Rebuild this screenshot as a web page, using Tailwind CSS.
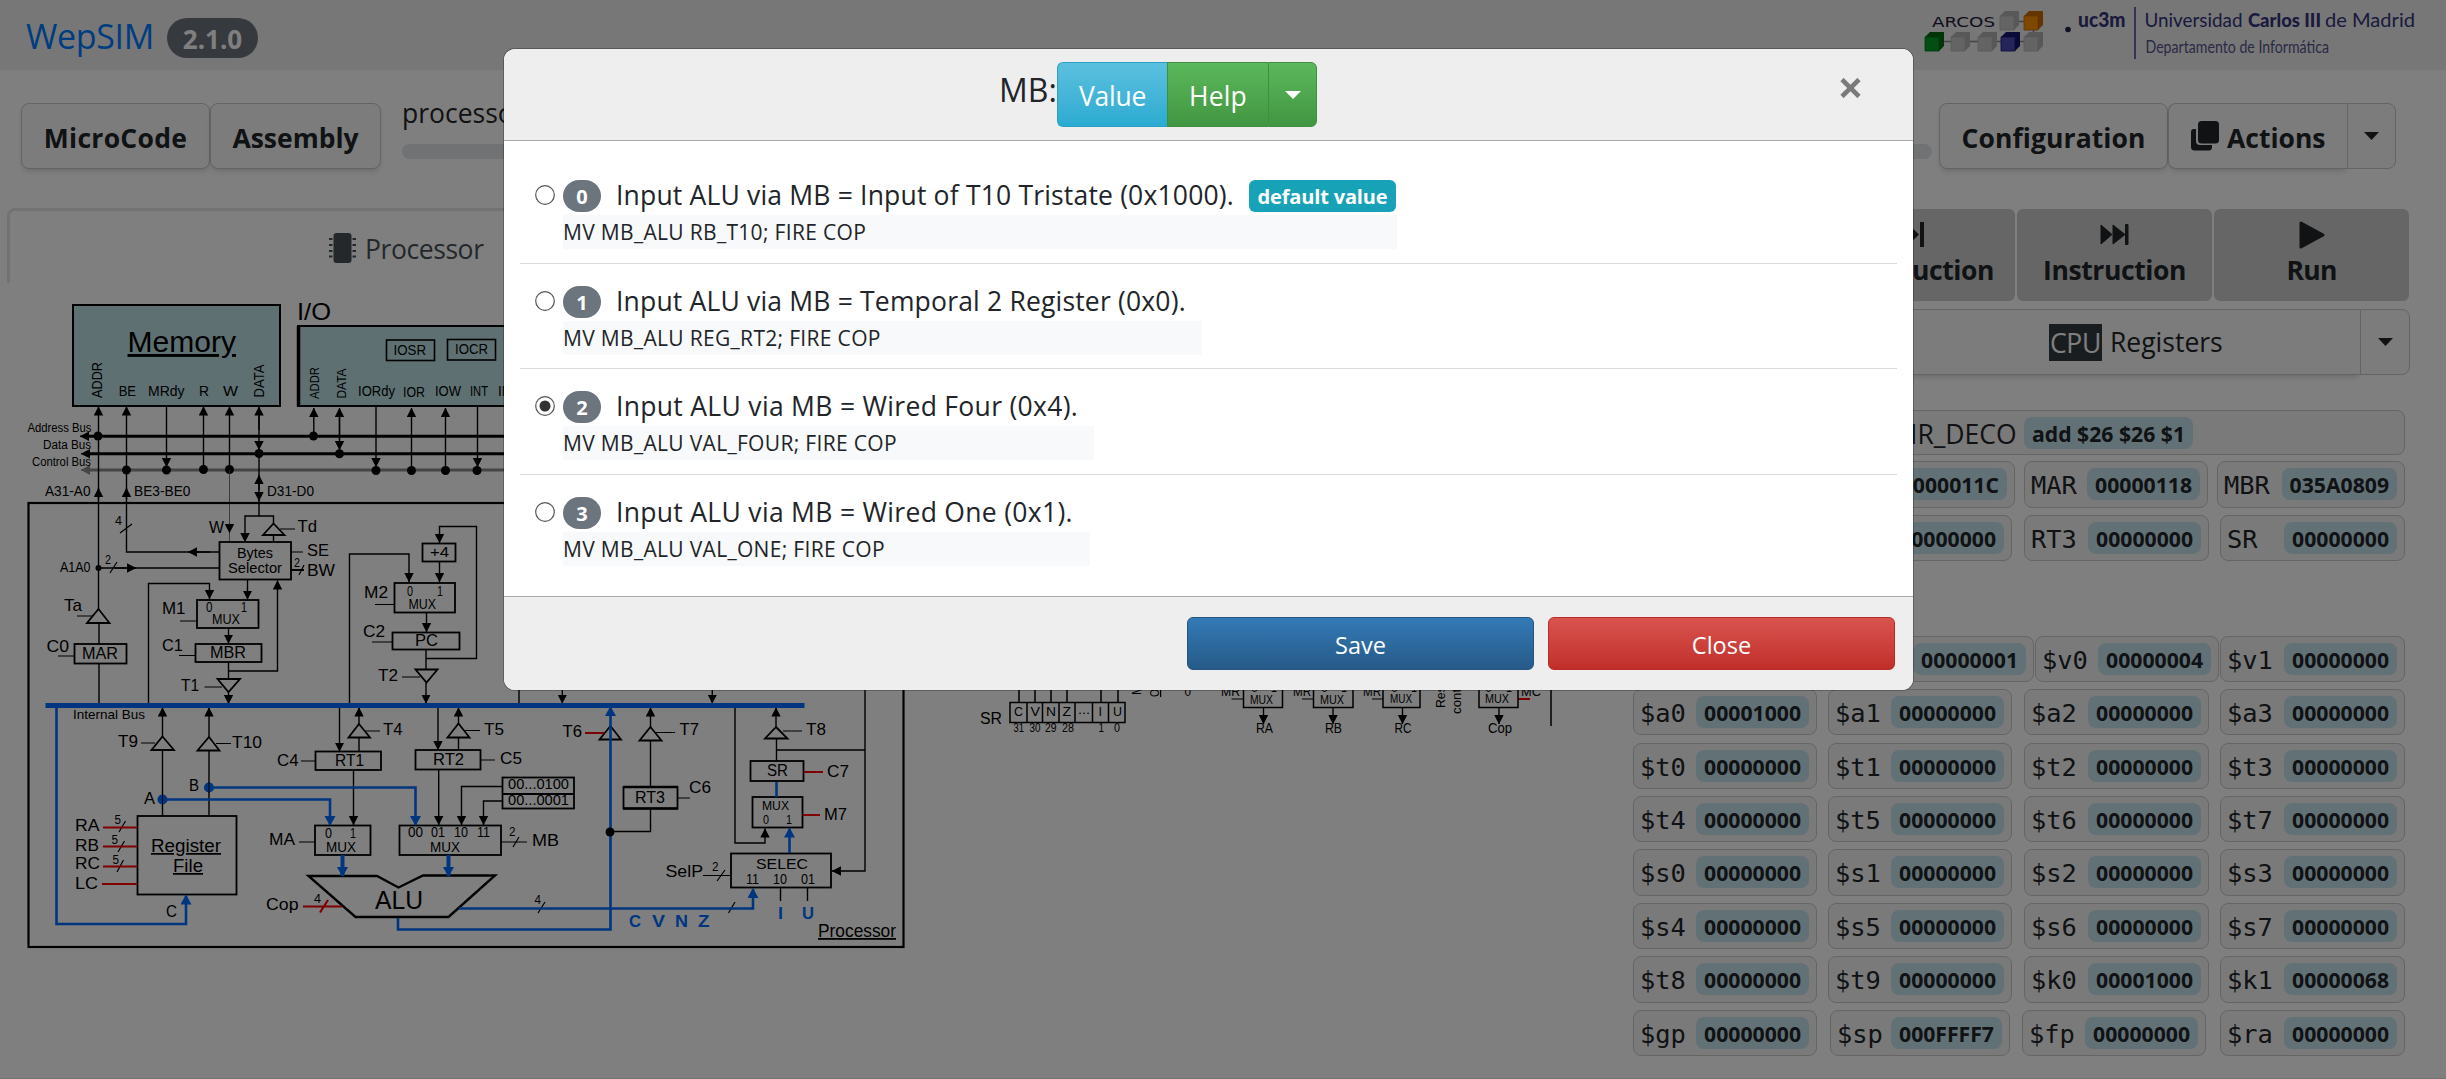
<!DOCTYPE html>
<html lang="en">
<head>
<meta charset="utf-8">
<title>WepSIM</title>
<script src="https://cdn.jsdelivr.net/npm/@tailwindcss/browser@4"></script>
</head>
<body class="relative w-[2446px] h-[1079px] overflow-hidden bg-white text-[#212529] font-['Open_Sans','Noto_Sans',sans-serif] text-[26.5px] leading-[36px]">

<div class="flex flex-col w-full h-full">
  <!-- top bar -->
  <header class="h-[70px] shrink-0 bg-[#eeeeee] flex justify-between">
    <div class="flex items-start pl-[26px]">
      <span class="text-[#007bff] text-[34px] leading-[72px] tracking-[-0.33px] w-[141px]">WepSIM</span>
      <span class="mt-[18px] w-[91px] h-10 rounded-full bg-[#6c757d] text-white font-bold text-[26px] leading-[43px] text-center">2.1.0</span>
    </div>
    <svg class="w-[540px] h-[70px]" viewBox="1906 0 540 70">
      <g id="cubes"></g>
      <g font-family="DejaVu Sans,sans-serif"><text x="1932" y="27.3" font-size="13.5" textLength="63" lengthAdjust="spacingAndGlyphs" fill="#221a3a">ARCOS</text></g>
      <circle cx="2068" cy="29.5" r="2.8" fill="#20204a"/>
      <path d="M2135 7V59" stroke="#4a4a96" stroke-width="1.6"/>
      <g font-family="Lato,sans-serif" fill="#34347c">
        <text x="2078" y="27" font-size="20.5" font-weight="900" textLength="47.5" lengthAdjust="spacingAndGlyphs">uc3m</text>
        <text x="2144.5" y="27.3" font-size="19.5" textLength="98" lengthAdjust="spacingAndGlyphs">Universidad</text>
        <text x="2248" y="27.3" font-size="19.5" font-weight="900" textLength="73" lengthAdjust="spacingAndGlyphs">Carlos III</text>
        <text x="2325" y="27.3" font-size="19.5" textLength="90" lengthAdjust="spacingAndGlyphs">de Madrid</text>
        <text x="2145.5" y="53.3" font-size="17" textLength="183.5" lengthAdjust="spacingAndGlyphs" fill="#55558c">Departamento de Informática</text>
      </g>
    </svg>
  </header>

  <!-- toolbar -->
  <div class="h-[138px] shrink-0 flex items-start pt-[33px] pl-[21px] pr-[50px] font-bold">
    <button class="w-[189px] h-[66px] pt-[3px] rounded-lg border border-[#c8c8c8] bg-[#f8f9fa] shadow-md tracking-[0.29px]">MicroCode</button>
    <button class="w-[171px] h-[66px] pt-[3px] rounded-lg border border-[#c8c8c8] bg-[#f8f9fa] shadow-md">Assembly</button>
    <div class="flex-1 ml-[21px] mr-[7px] mt-[-8px] font-normal">
      <div class="leading-[37px] h-[49px]">processor ready</div>
      <div class="h-[15px] rounded-lg bg-[#e1e5e9]"></div>
    </div>
    <button class="w-[229px] h-[66px] pt-[3px] rounded-lg border border-[#c8c8c8] bg-[#f8f9fa] shadow-md tracking-[0.09px]">Configuration</button>
    <button class="w-[179px] h-[66px] pt-[3px] pl-[22px] flex items-center rounded-l-lg border border-r-0 border-[#c8c8c8] bg-[#f8f9fa] shadow-md">
      <svg class="w-7 h-[30px] mr-2 mt-[-3px]" viewBox="0 0 28 30" fill="#212529"><path d="M0 11a3 3 0 0 1 3-3h2v12a4 4 0 0 0 4 4h12v2a3 3 0 0 1-3 3.5H3.500A3.500 3.500 0 0 1 0 26z"/><rect x="7" y="0" width="21" height="22.500" rx="3.500"/></svg>
      <span>Actions</span></button>
    <button class="w-[49px] h-[66px] flex items-center justify-center rounded-r-lg border border-[#c8c8c8] bg-[#f8f9fa]"><svg class="w-[15px] h-2" viewBox="0 0 15 8"><path d="M0 0H15L7.500 8z" fill="#212529"/></svg></button>
  </div>

  <main class="flex">
    <section class="w-[1632px] h-[870px] shrink-0 pl-[7px]">
      <div class="h-[75px] w-[900px] rounded-tl-lg border-t-[3px] border-l-[3px] border-[#e4e4e4] text-[#495057] flex pl-[318px] pt-[18px]">
        <svg class="w-[29px] h-[30px] mt-1 mr-[8px]" viewBox="0 0 29 30"><rect x="5.500" y="0" width="18" height="30" rx="3" fill="#495057"/><path d="M1 6H28M1 12H28M1 18H28M1 23.500H28" stroke="#495057" stroke-width="2.200" stroke-dasharray="3.500 20 3.500"/></svg>
        <span class="leading-[41px] tracking-[-0.42px]">Processor</span>
      </div>
      <svg class="w-[1625px] h-[680px]" viewBox="7 283 1625 680" fill="none" stroke="#000" stroke-width="1.400">
        <defs>
          <marker id="a" markerUnits="userSpaceOnUse" markerWidth="12" markerHeight="12" refX="9" refY="5" orient="auto"><path d="M0 .3L9.200 5L0 9.700z" fill="#000" stroke="none"/></marker>
          <marker id="b" markerUnits="userSpaceOnUse" markerWidth="12" markerHeight="12" refX="9" refY="5.500" orient="auto"><path d="M0 0L10 5.500L0 11z" fill="#006cff" stroke="none"/></marker>
          <marker id="g" markerUnits="userSpaceOnUse" markerWidth="12" markerHeight="12" refX="9" refY="5" orient="auto"><path d="M0 0L9 5L0 10z" fill="#8a8a8a" stroke="none"/></marker>
        </defs>
        <!-- memory and I/O -->
        <g fill="#bce0e4" stroke-width="2">
          <rect x="73" y="305" width="207" height="101"/>
          <rect x="298" y="326" width="320" height="80"/>
        </g>
        <path d="M298.500 326V406.500" stroke-width="3.500"/>
        <g stroke-width="1.600"><rect x="386.500" y="340" width="48" height="20.500"/><rect x="447.500" y="339.500" width="48" height="20.500"/></g>
        <!-- buses -->
        <path d="M620 436.300H88" stroke-width="3"/><path d="M620 453.700H88" stroke-width="3"/>
        <path d="M620 470H88" stroke="#8a8a8a" stroke-width="3"/>
        <path d="M90 436.300H80" marker-end="url(#a)"/><path d="M90 453.700H81" marker-end="url(#a)"/><path d="M90 470H81" stroke="#8a8a8a" marker-end="url(#g)"/>
        <g fill="#000" stroke="none">
          <circle cx="98" cy="436" r="4.500"/><circle cx="313.500" cy="436" r="4.500"/><circle cx="259" cy="453.500" r="4.500"/><circle cx="339.500" cy="453.700" r="4.500"/>
          <circle cx="126.500" cy="470" r="4.500"/><circle cx="166.500" cy="470" r="4.500"/><circle cx="203.500" cy="469.500" r="4.500"/><circle cx="229.500" cy="469.500" r="4.500"/>
          <circle cx="376" cy="470.500" r="4.500"/><circle cx="411.500" cy="470.500" r="4.500"/><circle cx="445.500" cy="470.500" r="4.500"/><circle cx="477" cy="470.500" r="4.500"/>
          <circle cx="98.500" cy="568" r="3"/>
        </g>
        <path d="M229.500 470V541" stroke="#555" stroke-width=".8"/>
        <g marker-end="url(#a)">
          <path d="M98.500 609V406.500"/><path d="M98.500 500V488"/>
          <path d="M219 552H126.500V406.500"/><path d="M126.500 500V488"/>
          <path d="M166.500 406V467"/><path d="M203.500 470V406.500"/><path d="M229.500 470V406.500"/>
          <path d="M259 430V406.500"/><path d="M259 410V450"/><path d="M259 490V475"/><path d="M259 454V501"/>
          <path d="M313.800 436V408"/><path d="M339.500 440V408"/><path d="M339.500 412V450"/>
          <path d="M376 406V467"/><path d="M411.500 470V408"/><path d="M445.500 470V408"/><path d="M477.500 406V467"/>
          <path d="M210 552H188"/><path d="M115 568H136"/>
          <path d="M229.500 530V533" stroke-width=".5"/><path d="M259 516H245V542"/>
          <path d="M148.500 703V583.500H209.500V599"/><path d="M247.500 579.500V599.500"/><path d="M228.500 628V643.500"/><path d="M228.500 692V704"/>
          <path d="M228.500 671H277.500V580.500"/>
          <path d="M349.500 705V554H409V582"/><path d="M426 658.500H476.500V526.500H439.500V543"/><path d="M439.500 561.500V582"/><path d="M426.500 612.500V632"/><path d="M426 683V703.500"/>
          <path d="M162.500 737V707.500"/><path d="M209 737V707.500"/><path d="M339.500 705V751.500"/><path d="M359 724V707.500"/><path d="M353.500 770V825"/>
          <path d="M438 705V750"/><path d="M458.500 724V707.500"/><path d="M438.700 769.500V825"/>
          <path d="M502.500 786.500H461.500V825"/><path d="M502.500 801H483.500V825"/>
          <path d="M650.500 727V707.500"/><path d="M562.300 685V703.500"/><path d="M712.300 685V703.500"/><path d="M735 705V843H765V828.500"/><path d="M776 727V707.500"/><path d="M865 685V871H832"/>
          <path d="M1263.500 707.500V724"/><path d="M1333 707.500V724"/><path d="M1402.500 707.500V724"/><path d="M1499 707.500V724"/>
        </g>
        <!-- processor frame -->
        <rect x="28.500" y="503" width="875" height="444" stroke-width="2.200"/>
        <path d="M259 500V516H273.500V523M273.500 535V542M99 623V644M99 663V705M98.500 568H219M162.500 750V816M209 750V816M228.500 662V679M426 649.500V669M359 737V751M458.500 737V750M519 685V705M650.500 740V787M650.500 808.500V831.500H610M776.500 738.500V761M776.500 750H865M780.500 888V901M807.500 888V901"/>
        <g stroke-width="1.200"><path d="M58 656H74M77 616H93M280 529H295M291 552H303M180 621H197M179 655.500H195M204.500 687H222M375 604.500H394M372 642H392M402 677H420M141 743H155M216 743.500H231M365 731H380M301 761H315M465 730.500H480M480 760H495M299 842H315M501 842H527M656 732.500H675M677 798H690M783 731H802M703 875.500H731M1231.500 699H1243M1302 699H1313M1372 699H1383"/>
        <path d="M120 533L132 524M110 573L117 562M299 575L304 565M119 832L125.500 821M118 852L124.500 841M117 872L123.500 860M513 847L519 837M538 913L545 902M728.500 913L735 902M717 881L725 870"/></g>
        <path d="M291 570H304" stroke-width="2"/>
        <!-- tri-state gates -->
        <g stroke-width="1.800"><path d="M98.500 609L109.500 623H87zM273.500 523.500L284.500 535H263zM217.500 679H240L228.500 692zM415.500 669.500H437.500L426.500 682.500zM162.500 736.500L174 750H151.500zM209 737L219.500 750.500H197.500zM359 724L370 737.500H348.500zM458.500 723.500L469.500 737.500H447.500zM610.500 726L621 739.500H599.500zM650.500 727L661.500 740.500H639.500zM776 727L787.500 738.500H765z"/></g>
        <!-- blocks -->
        <g stroke-width="1.800">
          <rect x="219.500" y="542" width="71.500" height="37.500"/><rect x="74.500" y="644" width="52" height="19.500"/>
          <rect x="197" y="600" width="61.500" height="28"/><rect x="195.500" y="644" width="66" height="18"/>
          <rect x="422.500" y="543.500" width="33" height="18"/><rect x="394.500" y="583" width="60.500" height="29.500"/><rect x="392.500" y="632.500" width="67" height="17"/>
          <rect x="137.500" y="816" width="99" height="78.500"/><rect x="315.500" y="751.500" width="65.500" height="18.500"/><rect x="415.500" y="750" width="65" height="19.500"/>
          <rect x="502.500" y="777.500" width="71.500" height="31"/><path d="M502 794H574"/>
          <rect x="315" y="825.500" width="55.500" height="29.500"/><rect x="399.500" y="825.500" width="101.500" height="29.500"/>
          <rect x="623.500" y="787" width="54" height="21.500"/><path d="M623 787H678M623 808.500H678" stroke-width="2.600"/>
          <rect x="750.500" y="761" width="53" height="20"/><rect x="752.500" y="797" width="50" height="30.500"/><rect x="731" y="853.500" width="100" height="34"/>
        </g>
        <path d="M308.500 876H377L398.500 887.500L423 875.500H495L448.500 917H355.500z" stroke-width="2.400"/>
        <!-- active signals -->
        <g stroke="#006cff" stroke-width="2.600">
          <path d="M45.500 705.500H804.500" stroke-width="5"/>
          <path d="M56.500 706V924H186V895.500" marker-end="url(#b)"/>
          <path d="M209 787.500H415.500V825" marker-end="url(#b)"/><path d="M162.500 799.500H330V825" marker-end="url(#b)"/>
          <path d="M342.500 855V876" stroke-width="4" marker-end="url(#b)"/><path d="M448.500 855V876" stroke-width="4" marker-end="url(#b)"/>
          <path d="M398 918V929.500H610.500V707" marker-end="url(#b)"/><path d="M459 908.500H753V889" marker-end="url(#b)"/>
          <path d="M776.500 782V797"/><path d="M789.500 853V828.500" marker-end="url(#b)"/>
          <circle cx="209" cy="787.500" r="3.800" fill="#006cff"/><circle cx="162.500" cy="799.500" r="3.800" fill="#006cff"/>
        </g>
        <path d="M162.500 794V805M209 782V793" stroke-width="1"/>
        <circle cx="610" cy="832" r="4.500" fill="#000" stroke="none"/>
        <path d="M103 827.500H137M103 846.500H137M103 866.500H137M102 884H137M303 906.500H342M320 912.500L328 900M585 733H604M804 772H823M803 815H820M1518 699H1530" stroke="#f00" stroke-width="2.200"/>
        <!-- control unit -->
        <g stroke-width="1.500">
          <rect x="1010" y="702.500" width="115" height="20"/>
          <path d="M1027 702V722M1042.500 702V722M1059 702V722M1075 702V722M1092.500 702V722M1108.500 702V722M1019 685V702M1035 685V702M1051 685V702M1067 685V702M1101 685V702M1118 685V702"/>
          <path d="M1243.500 685V707.500H1282.500V685M1313.500 685V707.500H1353V685M1383 685V707.500H1420V685M1479 685V707.500H1518V685M1551 685V726"/>
        </g>
        <g id="labels" fill="#000" stroke="none" font-family="Liberation Sans,Arial,sans-serif"></g>
      </svg>
    </section>

    <!-- right panel -->
    <section class="w-[778px] shrink-0 flex flex-col">
      <div class="flex gap-[2px] pt-[1px] justify-end font-bold leading-[36px] pr-[1px]">
        <button class="w-[202px] h-[92px] rounded-md bg-[#cccccc] flex flex-col items-center pt-3"><svg class="w-[19px] h-[27px]" viewBox="0 0 19 27" fill="#212529"><path d="M1 1L14 13.500L1 26zM15 1H19V26H15z"/></svg><span class="mt-[4px] tracking-[-0.4px]">µInstruction</span></button>
        <button class="w-[195px] h-[92px] rounded-md bg-[#cccccc] flex flex-col items-center pt-3"><svg class="w-[29px] h-[27px]" viewBox="0 0 29 27" fill="#212529" stroke="#212529" stroke-linejoin="round"><path d="M1 4L12 13.500L1 23zM13 4L25 13.500L13 23z"/><path d="M25.500 3.500H28V23.500H25.500z"/></svg><span class="mt-[4px] tracking-[-0.4px]">Instruction</span></button>
        <button class="w-[195px] h-[92px] rounded-md bg-[#cccccc] flex flex-col items-center pt-3"><svg class="w-[26px] h-[28px]" viewBox="0 0 26 28" fill="#212529" stroke="#212529" stroke-width="3" stroke-linejoin="round"><path d="M2 2L24 14L2 26z"/></svg><span class="mt-[3px] tracking-[-0.7px]">Run</span></button>
      </div>
      <div class="flex mt-2">
        <div class="flex-1 h-[66px] pl-[416px] rounded-l-lg border border-r-0 border-[#c8c8c8] bg-[#f8f9fa] shadow-md flex items-center"><span class="bg-[#343a40] text-white h-[37px] w-[53px] text-center leading-[39px] mr-2 tracking-[-0.3px]">CPU</span><span class="leading-[39px]">Registers</span></div>
        <div class="w-[50px] h-[66px] rounded-r-lg border border-[#c8c8c8] bg-[#f8f9fa] flex items-center justify-center"><svg class="w-[15px] h-2" viewBox="0 0 15 8"><path d="M0 0H15L7.500 8z" fill="#212529"/></svg></div>
      </div>
      <div id="regs" class="flex flex-col pr-[5px] pt-[35px]"></div>
    </section>
  </main>
  <div class="mt-auto h-px bg-[#e4e4e4]"></div>
</div>

<!-- backdrop and dialog -->
<div class="absolute inset-0 bg-black/50 flex justify-center items-start pt-[48px] pr-[29px]">
  <div class="w-[1411px] h-[643px] rounded-xl border border-black/25 bg-white bg-clip-padding overflow-hidden flex flex-col">
    <div class="h-[92px] shrink-0 bg-[#eeeeee] border-b border-[#a8a8a8] flex relative pl-[495px] pt-[13px]">
      <span class="text-[32px] leading-[55px] w-[58px]">MB:</span>
      <div class="flex h-[65px] text-white">
        <button class="w-[110px] pt-[2px] rounded-l-md border border-r-0 border-[#28a1c5] bg-linear-to-b from-[#5bc0de] to-[#2aabd2] tracking-[-0.27px]">Value</button>
        <button class="w-[101px] pt-[2px] border border-r-0 border-[#3e8f3e] bg-linear-to-b from-[#5cb85c] to-[#419641] tracking-[0.17px]">Help</button>
        <button class="w-[49px] flex items-center justify-center rounded-r-md border border-[#3e8f3e] bg-linear-to-b from-[#5cb85c] to-[#419641]"><svg class="w-4 h-2" viewBox="0 0 16 8"><path d="M0 0H16L8 8z" fill="#fff"/></svg></button>
      </div>
      <svg class="absolute left-[1336px] top-[29px] w-[21px] h-[20px]" viewBox="0 0 21 20"><path d="M2 1.500L19 18.500M19 1.500L2 18.500" stroke="#7a7a7a" stroke-width="4.600"/></svg>
    </div>
    <div id="options" class="flex-1 px-4 pt-[17px]"></div>
    <div class="h-[94px] shrink-0 bg-[#eeeeee] border-t border-[#a8a8a8] flex justify-end gap-[14px] pt-[20px] pr-[18px] text-white text-[23.5px]">
      <button class="w-[347px] h-[53px] pt-[2px] rounded-md border border-[#245580] bg-linear-to-b from-[#337ab7] to-[#265a88]">Save</button>
      <button class="w-[347px] h-[53px] pt-[2px] rounded-md border border-[#b92c28] bg-linear-to-b from-[#d9534f] to-[#c12e2a]">Close</button>
    </div>
  </div>
</div>

<script>
// control-signal options: label, micro-operation, micro-operation block width
const options = [
  ['Input ALU via MB = Input of T10 Tristate (0x1000).', 'MV MB_ALU RB_T10; FIRE COP', 834],
  ['Input ALU via MB = Temporal 2 Register (0x0).', 'MV MB_ALU REG_RT2; FIRE COP', 639],
  ['Input ALU via MB = Wired Four (0x4).', 'MV MB_ALU VAL_FOUR; FIRE COP', 531],
  ['Input ALU via MB = Wired One (0x1).', 'MV MB_ALU VAL_ONE; FIRE COP', 527],
];
document.getElementById('options').innerHTML = options.map((o, i) => `
  <div class="h-[105.6px] ${i < 3 ? 'border-b border-[#dcdcdc]' : ''} pt-[22px] pl-[15px] flex">
    <svg class="w-5 h-5 mt-[5px] mr-2" viewBox="0 0 20 20"><circle cx="10" cy="10" r="9.300" fill="#fff" stroke="#555" stroke-width="1.200"/>${i === 2 ? '<circle cx="10" cy="10" r="5.500" fill="#333"/>' : ''}</svg>
    <div>
      <div class="h-[35px] flex whitespace-nowrap">
        <span class="w-[38px] h-8 rounded-full bg-[#6c757d] text-white font-bold text-[20px] leading-[34px] text-center mr-[15px]">${i}</span>
        <span class="leading-[30px] ${i < 2 ? 'tracking-[0.18px]' : 'tracking-[0.31px]'}">${o[0]}</span>
        ${i === 0 ? '<span class="ml-[15px] w-[147px] h-8 rounded-md bg-[#17a2b8] text-white font-bold text-[20px] leading-[34px] text-center tracking-[-0.15px]">default value</span>' : ''}
      </div>
      <div class="h-[34px] bg-[#f8f9fa] text-[21px] leading-[35px] tracking-[0.32px] whitespace-nowrap" style="width:${o[2]}px">${o[1]}</div>
    </div>
  </div>`).join('');

// register rows: gap above, height, cells [left, width, name, value]
const rows = [
  [0, 45, [[0, 772, 'IR_DECO', 'add $26 $26 $1']]],
  [6, 47, [[0, 184, 'PC', '00000118'], [195, 187, 'IR', '0000011C'], [391, 184, 'MAR', '00000118'], [584, 188, 'MBR', '035A0809']]],
  [7, 46, [[0, 184, 'RT1', '00000000'], [195, 184, 'RT2', '00000000'], [391, 185, 'RT3', '00000000'], [587, 185, 'SR ', '00000000']]],
  [75, 46, [[0, 184, '$0', '00000000'], [217, 184, '$at', '00000001'], [402, 184, '$v0', '00000004'], [587, 185, '$v1', '00000000']]],
];
const std = (names, vals = []) => names.map((n, i) => [[0, 195, 391, 587][i], [184, 184, 185, 185][i], n, vals[i] || '00000000']);
rows.push([7, 46, std(['$a0', '$a1', '$a2', '$a3'], ['00001000'])]);
rows.push([8, 46, std(['$t0', '$t1', '$t2', '$t3'])], [7, 46, std(['$t4', '$t5', '$t6', '$t7'])], [7, 47, std(['$s0', '$s1', '$s2', '$s3'])], [7, 46, std(['$s4', '$s5', '$s6', '$s7'])], [7, 47, std(['$t8', '$t9', '$k0', '$k1'], ['', '', '00001000', '00000068'])]);
rows.push([7, 46, [[0, 184, '$gp', '00000000'], [197, 180, '$sp', '000FFFF7'], [389, 184, '$fp', '00000000'], [587, 185, '$ra', '00000000']]]);
document.getElementById('regs').innerHTML = rows.map(([mt, h, cells]) => {
  let x = 0;
  return `<div class="flex pl-[1px]" style="margin-top:${mt}px;height:${h}px">` + cells.map(([l, w, n, v]) => {
    const ml = l - x; x = l + w;
    const deco = n === 'IR_DECO';
    return `<div class="shrink-0 rounded-lg border border-[#cacaca] bg-[#f5f5f5] flex ${deco ? 'pl-[275px] pt-[6px]' : 'justify-between pl-[6px] pr-[7px] pt-[6px]'}" style="margin-left:${ml}px;width:${w}px">
      <span class="whitespace-pre ${deco ? 'pl-[1px] leading-[35px] w-[115px]' : "font-['DejaVu_Sans_Mono',monospace] text-[25.4px] leading-[34px]"}">${n}</span>
      <span class="h-8 rounded-lg bg-[#c5e3ec] font-bold text-[21.2px] leading-[33px] px-[8px]">${v}</span></div>`;
  }).join('') + '</div>';
}).join('');

// logo cubes: x, y, front colour, side colour
const cubes = [[2000, 11, '#c9c9c9', '#b0b0b0'], [2024, 11, '#ff9100', '#c86a00'], [1925, 32, '#00a028', '#006a10'], [1951, 32, '#c9c9c9', '#b0b0b0'], [1978, 32, '#c9c9c9', '#b0b0b0'], [2001, 32, '#4a4ab4', '#14146e'], [2024, 32, '#c9c9c9', '#b0b0b0']];
document.getElementById('cubes').innerHTML = '<path d="M1938 41.500H2030M2014 21.500H2028M2033.500 28V38" stroke="#888" stroke-width="1.500"/>' +
  cubes.map(([x, y, f, s]) => `<path d="M${x} ${y + 5}L${x + 5} ${y}H${x + 19}V${y + 14}L${x + 14} ${y + 19}H${x}z" fill="${s}"/><path d="M${x} ${y + 5}H${x + 14}V${y + 19}H${x}z" fill="${f}" stroke="${s}" stroke-width=".8"/>`).join('');

// diagram labels: text, x start, x end, baseline, size, style (u underlined, b blue)
const L = [
  ['Memory',127.5,236,352,29,'u'],['BE',118.7,136,396,14],['MRdy',148,184.6,396,14],['R',199,209,396,14],['W',223,238,396,14],['I/O',297,331,320,24],
  ['IOSR',393.5,426,355,14],['IOCR',455,488,354,14],['IORdy',358,395,396,14],['IOR',403,425,396.5,14],['IOW',435,461,396,14],['INT',470,488,396,14],['INTA',498,528,396,14],
  ['Address Bus',27.5,91.5,431.7,12],['Data Bus',43,91,449,12],['Control Bus',32,91,466,12],['A31-A0',45,90.5,496,14],['BE3-BE0',134,190.5,496,14],['D31-D0',267,314,496,14],
  ['MAR',82,118,658.7,16],['C0',46.5,69,652,17],['Ta',64,82,611,17],['4',115,122,525,13],['A1A0',60,90.5,572,14],['2',105,111,564,13],['Bytes',237,273,558,15],['Selector',228,282,573,15],
  ['W',209,224,533,16],['Td',297.5,317,532,17],['SE',307,329,555.5,17],['2',294,300,567,12],['BW',307,335,576,17],['0',206,212.5,612,14],['1',241,247,612,14],['MUX',212,240,624,14],['M1',162,185.5,614,17],
  ['MBR',210,246,658,16],['C1',162,183,651,17],['T1',181,199,691,17],['+4',430,449,557,15],['0',407,413,596,14],['1',437,443,596,14],['MUX',408.5,436,609,14],['M2',364,388,598,17],['PC',415,438,646,16],['C2',363,385,637,17],['T2',378,398,681,17],
  ['Internal Bus',73,145,719,13],['C',166,177,917,17],['T9',118,138,747,17],['T10',232,262,748,17],['B',189,199,791,16],['A',144,155,804,16],['Register',151,221,852,17.5,'u'],['File',173,203,872,17.5,'u'],
  ['RA',75,99.5,830.5,17],['RB',75,99,851,17],['RC',75,100,869,17],['LC',75,98,889,17],['5',114.500,121,824,12.5],['5',111.500,118,844,12.5],['5',112.500,119,864,12.5],
  ['RT1',335,364,766,16],['C4',277,298.5,766,17],['T4',383,402.5,735,17],['RT2',433,464,765,16],['T5',484,504,735,17],['C5',500,522,764,17],['00...0100',508,569,789,14],['00...0001',508,569,805,14],
  ['0',325,332,838,14],['1',350,356,838,14],['MUX',326,356,852,14],['MA',269,295,845,17],['00',408,423,837,14],['01',431,445,837,14],['10',454,468,837,14],['11',477,490,837,14],['MUX',430,460,852,14],['2',509,515.500,836,12.5],['MB',532,559,846,17],
  ['ALU',375,423,908.5,26],['Cop',266,298.5,910,17],['4',314,321,903,12.5],['4',534.500,541,904,12.5],['T6',562.5,582,737,17],['T7',679.5,699,735,17],['RT3',635,665,803,16],['C6',689,711,793,17],['T8',806,826,735,17],['SR',767,788,776,16],['C7',827,849,777,17],
  ['MUX',762,789,810,13.5],['0',763,769,824,12],['1',786,792,824,12],['M7',824,847,820,17],['SELEC',756,808,869,15],['11',746,759,884,14],['10',773,787,884,14],['01',801,815,884,14],['SelP',665.5,703,877,17],['2',712,718.500,871,12.5],
  ['C',629,641,927,17,'b'],['V',652,665,927,17,'b'],['N',675,688,927,17,'b'],['Z',698,709.500,927,17,'b'],['I',778,783,919,17,'b'],['U',802,814,919,17,'b'],['Processor',818,896,937,18,'u'],
  ['SR',980,1002,724,16],['C',1014,1023,716,13],['V',1030.500,1040,716,13],['N',1046,1056,716,13],['Z',1062.500,1071,716,13],['...',1078,1090,714,13],['I',1098.500,1102,716,13],['U',1113,1122,716,13],
  ['31',1013.500,1024,732,12],['30',1029.500,1040.500,732,12],['29',1045,1056.500,732,12],['28',1062,1074,732,12],['1',1098.500,1104,732,12],['0',1114,1120,732,12],['0',1184.500,1191,696,12],
  ['MUX',1250,1273,704,12.5],['MUX',1320,1344,704,12.5],['MUX',1390,1412,703,12.5],['MUX',1485,1509,703,12.5],['RA',1256,1273,733,14],['RB',1325,1342,733,14],['RC',1394.500,1411.500,733,14],['Cop',1488,1512,733,14],
  ['MR',1221,1240,696,13],['MR',1293,1311,696,13],['MR',1363,1381,696,13],['MC',1521,1541,696,13],
  ['0',1251,1258,692,12],['1',1271,1277,692,12],['0',1321,1328,692,12],['1',1341,1347,692,12],['0',1391,1398,692,12],['1',1411,1417,692,12],['0',1485,1492,692,12],['1',1506,1512,692,12],
];
const blue = 'fill="#006cff" font-weight="bold"';
let s = L.map(([t, a, b, y, z, k]) => `<text x="${a}" y="${y}" font-size="${z}" textLength="${b - a}" lengthAdjust="spacingAndGlyphs" ${k === 'u' ? 'text-decoration="underline"' : k === 'b' ? blue : ''}>${t}</text>`).join('');
// vertical labels: text, baseline x, bottom y, length, size
s += [['ADDR',101.5,398,36,14],['DATA',263.7,397.5,33,14],['ADDR',318.7,399,32,13],['DATA',346,398.5,30,13],['Reset',1445,708,32,13],['control',1461,714,40,13],['M',1141,695,10,12],['O',1159,697,8,12]]
  .map(([t, x, y, l, z]) => `<text transform="translate(${x} ${y}) rotate(-90)" font-size="${z}" textLength="${l}" lengthAdjust="spacingAndGlyphs" ${t === 'O' ? 'text-decoration="underline"' : ''}>${t}</text>`).join('');
document.getElementById('labels').innerHTML = s;
</script>
</body>
</html>
